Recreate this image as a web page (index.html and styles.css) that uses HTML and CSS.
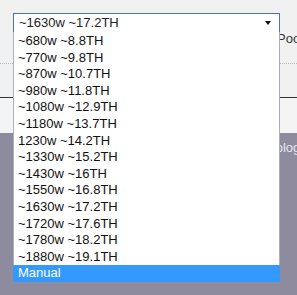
FILE: index.html
```html
<!DOCTYPE html>
<html lang="en">
<head>
    <meta charset="UTF-8">
    <link rel="stylesheet" href="styles.css">
    <title>Miner Settings</title>
</head>
<body>
    <div class="page">
        <header class="top">
            <div class="pool-row">Pool</div>
            <div class="dotted"></div>
        </header>
        <section class="band"></section>
        <footer class="footer">
            <span class="footer-text">Technology</span>
        </footer>
    </div>

    <!-- open power profile dropdown -->
    <div class="select-box">
        <span class="select-value">~1630w ~17.2TH</span>
        <span class="select-arrow"></span>
    </div>
    <ul class="select-list">
        <li>~680w ~8.8TH</li>
        <li>~770w ~9.8TH</li>
        <li>~870w ~10.7TH</li>
        <li>~980w ~11.8TH</li>
        <li>~1080w ~12.9TH</li>
        <li>~1180w ~13.7TH</li>
        <li>1230w ~14.2TH</li>
        <li>~1330w ~15.2TH</li>
        <li>~1430w ~16TH</li>
        <li>~1550w ~16.8TH</li>
        <li>~1630w ~17.2TH</li>
        <li>~1720w ~17.6TH</li>
        <li>~1780w ~18.2TH</li>
        <li>~1880w ~19.1TH</li>
        <li class="selected">Manual</li>
    </ul>
</body>
</html>
```

FILE: styles.css
```css
body {
    margin: 0;
    padding: 0;
    font-family: 'Liberation Sans', Arial, sans-serif;
    font-size: 13px;
    color: #222;
    overflow: hidden;
}

.page {
    width: 297px;
    height: 295px;
    display: flex;
    flex-direction: column;
    overflow: hidden;
}

.top {
    height: 98px;
    box-sizing: border-box;
    background-color: #f1f1f1;
    border-bottom: 1px solid #333333;
    padding-top: 31px;
}

.pool-row {
    padding-left: 277px;
    height: 16px;
    line-height: 16px;
    white-space: nowrap;
    color: #333;
}

.dotted {
    margin-top: 16px;
    border-top: 1px dotted #b8b8b8;
}

.band {
    height: 35px;
    background-color: #f4f4f4;
}

.footer {
    flex: 1;
    background-color: #8f8b9f;
    padding-top: 7px;
    padding-left: 241px;
    white-space: nowrap;
}

.footer-text {
    color: #e6e6ea;
    line-height: 16px;
    font-size: 13px;
}

/* the select and its open list sit over the page */
.select-box {
    position: absolute;
    left: 13px;
    top: 13px;
    width: 267px;
    height: 20px;
    box-sizing: border-box;
    border: 1px solid #4c74b8;
    background-color: #ffffff;
    display: flex;
    align-items: center;
    padding-left: 5px;
    padding-right: 8px;
}

.select-value {
    flex: 1;
    line-height: 16px;
}

.select-arrow {
    width: 0;
    height: 0;
    border-left: 3px solid transparent;
    border-right: 3px solid transparent;
    border-top: 4px solid #111;
}

.select-list {
    position: absolute;
    left: 13px;
    top: 32px;
    width: 267px;
    box-sizing: border-box;
    margin: 0;
    padding: 0;
    list-style: none;
    background-color: #ffffff;
    border: 1px solid #a9b1bc;
    border-top: none;
    border-bottom: none;
}

.select-list li {
    height: 16.6px;
    line-height: 15px;
    padding-left: 4px;
    white-space: nowrap;
    color: #111;
}

.select-list li:first-child {
    margin-top: 1px;
}

.select-list li.selected {
    background-color: #3399ff;
    color: #ffffff;
    margin-left: -1px;
    margin-right: -1px;
    padding-left: 5px;
}
```
